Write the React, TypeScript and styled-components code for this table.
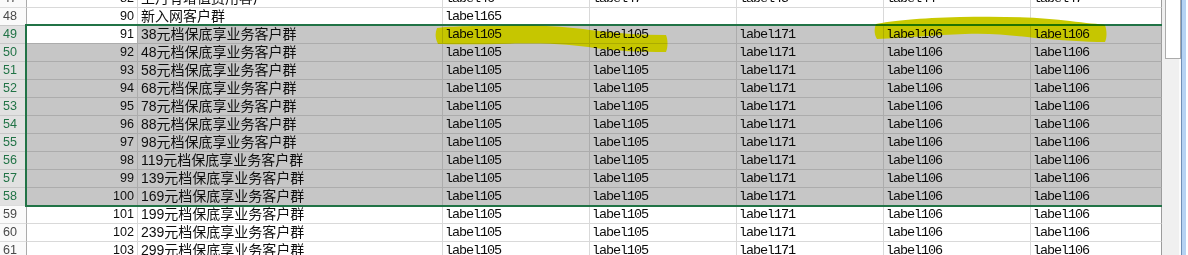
import React from 'react';
import styled, { createGlobalStyle, css } from 'styled-components';

const GlobalStyle = createGlobalStyle`
  html, body {
    margin: 0;
    padding: 0;
    background: #fff;
    overflow: hidden;
  }
`;

const Window = styled.div`
  position: relative;
  width: 1188px;
  height: 255px;
  display: flex;
  overflow: hidden;
  background: #fff;
`;

const Sheet = styled.div`
  position: relative;
  width: 1162px;
  height: 255px;
  overflow: hidden;
  flex-shrink: 0;
`;

const Rows = styled.div`
  display: flex;
  flex-direction: column;
  margin-top: -11px;
`;

const Row = styled.div`
  display: flex;
  height: 18px;
`;

const RowHeader = styled.div<{ $sel: boolean }>`
  box-sizing: border-box;
  width: 27px;
  height: 18px;
  flex-shrink: 0;
  display: flex;
  align-items: flex-end;
  padding: 0 0 1px 3px;
  line-height: 15px;
  font-family: 'Liberation Sans', Arial, sans-serif;
  font-size: 12.6px;
  border-top: 1px solid ${(p) => (p.$sel ? '#c9c9c9' : '#dcdcdc')};
  border-right: 1px solid #ababab;
  background: ${(p) => (p.$sel ? '#e1e1e1' : '#fafafa')};
  color: ${(p) => (p.$sel ? '#217346' : '#4a4a4a')};
`;

const baseCell = css<{ $sel: boolean; $active?: boolean; $last?: boolean }>`
  box-sizing: border-box;
  height: 18px;
  flex-shrink: 0;
  display: flex;
  align-items: flex-end;
  padding-bottom: 1px;
  line-height: 15px;
  white-space: nowrap;
  overflow: hidden;
  color: #0d0d0d;
  background: ${(p) => (p.$sel && !p.$active ? '#c6c6c6' : '#fff')};
  border-top: 1px solid ${(p) => (p.$sel ? '#acacac' : '#d9d9d9')};
  border-right: 1px solid
    ${(p) => (p.$last ? '#9c9c9c' : p.$sel ? '#acacac' : '#d9d9d9')};
`;

type CellProps = { $sel: boolean; $active?: boolean; $last?: boolean };

const NumCell = styled.div<CellProps>`
  ${baseCell};
  width: 111px;
  justify-content: flex-end;
  padding-right: 3px;
  font-family: 'Liberation Sans', Arial, sans-serif;
  font-size: 12.6px;
`;

const NameCell = styled.div<CellProps>`
  ${baseCell};
  width: 305px;
  padding-left: 3px;
  font-family: 'Liberation Sans', 'Noto Sans CJK SC', sans-serif;
  font-size: 14px;
`;

const LabelCell = styled.div<CellProps & { $w: number }>`
  ${baseCell};
  width: ${(p) => p.$w}px;
  padding-left: 2px;
  font-family: 'Liberation Mono', 'Courier New', monospace;
  font-size: 13.5px;
  letter-spacing: -1.1px;
`;

const Selection = styled.div`
  position: absolute;
  top: 24px;
  left: 25px;
  width: 1200px;
  height: 183px;
  box-sizing: border-box;
  border: 2px solid #217346;
  pointer-events: none;
`;

const ScrollTrack = styled.div`
  width: 19px;
  height: 255px;
  flex-shrink: 0;
  box-sizing: border-box;
  background: #f0f0f0;
  padding-left: 3px;
  border-right: 2px solid #fbfbfb;
`;

const Thumb = styled.div`
  width: 16px;
  height: 64px;
  margin-top: -5px;
  box-sizing: border-box;
  background: #fff;
  border: 1px solid #ababab;
`;

const FrameEdge = styled.div`
  width: 5px;
  height: 255px;
  flex-shrink: 0;
  box-sizing: border-box;
  border-left: 1px solid #6f8fb8;
  background: #b6d3f3;
`;

const Marks = styled.svg`
  position: absolute;
  inset: 0;
  pointer-events: none;
  mix-blend-mode: darken;
`;

const LABEL_WIDTHS = [147, 147, 147, 147, 131];

type RowData = { n: number; a: string; b: string; labels: string[] };

const prices = [38, 48, 58, 68, 78, 88, 98, 119, 139, 169, 199, 239, 299];

const rows: RowData[] = [
  {
    n: 47,
    a: '82',
    b: '上月有增值费用客户',
    labels: ['label46', 'label47', 'label45', 'label44', 'label47'],
  },
  { n: 48, a: '90', b: '新入网客户群', labels: ['label165', '', '', '', ''] },
  ...prices.map((p, i) => ({
    n: 49 + i,
    a: String(91 + i),
    b: `${p}元档保底享业务客户群`,
    labels: ['label105', 'label105', 'label171', 'label106', 'label106'],
  })),
];

const isSelected = (n: number) => n >= 49 && n <= 58;

const App: React.FC = () => {
  return (
    <Window>
      <GlobalStyle />
      <Sheet>
        <Rows>
          {rows.map((r) => {
            const sel = isSelected(r.n);
            return (
              <Row key={r.n}>
                <RowHeader $sel={sel}>{r.n}</RowHeader>
                <NumCell $sel={sel} $active={r.n === 49}>
                  {r.a}
                </NumCell>
                <NameCell $sel={sel}>{r.b}</NameCell>
                {r.labels.map((l, i) => (
                  <LabelCell
                    key={i}
                    $sel={sel}
                    $w={LABEL_WIDTHS[i]}
                    $last={i === LABEL_WIDTHS.length - 1}
                  >
                    {l}
                  </LabelCell>
                ))}
              </Row>
            );
          })}
        </Rows>
        <Selection />
      </Sheet>
      <ScrollTrack>
        <Thumb />
      </ScrollTrack>
      <FrameEdge />
      <Marks width="1188" height="255" viewBox="0 0 1188 255">
        <path
          fill="#c9c900"
          d="M437,28 C450,26 480,26 510,25.5 C545,25 570,27 590,30 C615,33 640,35 666,35 C668,40 668,47 666,52 C640,52 615,51 595,48 C575,45 555,43 520,43.5 C490,44 460,44.5 438,44 C435,38 435,33 437,28 Z"
        />
        <path
          fill="#c9c900"
          d="M876,24 C890,21 920,18 960,17 C1000,16 1040,17 1070,21 C1085,23 1100,24 1105,25 C1107,31 1107,37 1105,42 C1085,42 1060,40 1035,38 C1010,35 990,33 965,34 C935,35 905,38 877,39 C874,34 874,29 876,24 Z"
        />
      </Marks>
    </Window>
  );
};

export default App;
